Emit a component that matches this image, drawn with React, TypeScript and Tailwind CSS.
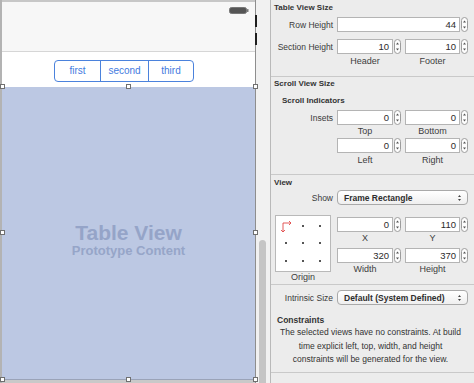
import React from "react";

const font = { fontFamily: '"Liberation Sans", Arial, sans-serif' };

function Stepper() {
    return (
        <svg width="7" height="15" viewBox="0 0 7 15" className="shrink-0">
            <rect x="0.5" y="0.5" width="6" height="14" rx="3" fill="#fdfdfd" stroke="#9c9c9c" />
            <path d="M2 5.5 L3.5 3.5 L5 5.5 Z" fill="#555" />
            <path d="M2 9.5 L3.5 11.5 L5 9.5 Z" fill="#555" />
        </svg>
    );
}

function Field({ value, w }: { value: string; w: string }) {
    return (
        <div className="flex items-center gap-[1px]">
            <div
                className={`${w} h-[15px] bg-white border border-[#b4b4b4] text-right pr-[3px] text-[9.5px] leading-[13px] text-[#2b2b2b]`}
            >
                {value}
            </div>
            <Stepper />
        </div>
    );
}

function Sub({ children, w }: { children: React.ReactNode; w: string }) {
    return <div className={`${w} text-center text-[9px] leading-[10px] text-[#3d3d3d]`}>{children}</div>;
}

function Dropdown({ label }: { label: string }) {
    return (
        <div className="w-[131px] h-[15px] rounded-[4px] border border-[#a9a9a9] bg-gradient-to-b from-white to-[#efefef] flex items-center justify-between pl-[6px] pr-[5px]">
            <span className="text-[8.5px] font-bold text-[#2e2e2e] leading-[10px]">{label}</span>
            <svg width="5" height="8" viewBox="0 0 5 8">
                <path d="M1 3 L2.5 1 L4 3 Z" fill="#444" />
                <path d="M1 5 L2.5 7 L4 5 Z" fill="#444" />
            </svg>
        </div>
    );
}

function Label({ children }: { children: React.ReactNode }) {
    return <div className="w-[62px] shrink-0 text-right text-[8.5px] leading-[10px] text-[#3a3a3a] whitespace-nowrap">{children}</div>;
}

function Handle({ className }: { className: string }) {
    return <div className={`absolute w-[5px] h-[5px] bg-white border border-[#6f6f6f] ${className}`} />;
}

function Phone() {
    return (
        <div className="relative w-[254px] flex flex-col border-r border-[#8e8e8e]">
            <div className="h-[2px] bg-[#c7c7c7]" />
            <div className="h-[50px] bg-[#f7f7f7] border-b border-[#d6d6d6] flex justify-end pt-[5px] pr-[6px]">
                <svg width="20" height="7" viewBox="0 0 20 7">
                    <rect x="0.5" y="0.5" width="17" height="6" rx="2" fill="#555" stroke="#777" />
                    <rect x="18" y="2" width="1.5" height="3" rx="0.5" fill="#777" />
                </svg>
            </div>
            <div className="h-[35px] bg-white pt-[8px] pl-[52px]">
                <div className="flex h-[22px] w-[140px] rounded-[4px] border border-[#4b82dc] text-[10px] text-[#3f7be0] leading-[20px]">
                    <div className="w-[46px] text-center border-r border-[#4b82dc]">first</div>
                    <div className="w-[48px] text-center border-r border-[#4b82dc]">second</div>
                    <div className="flex-1 text-center">third</div>
                </div>
            </div>
            <div className="relative h-[293px] bg-[#bcc8e3] flex flex-col items-center justify-center pt-[14px] border-b border-[#9aa3b8]">
                <div className="text-[21px] font-bold leading-[22px] text-[#95a4c8]">Table View</div>
                <div className="text-[13px] font-bold leading-[14px] text-[#96a5c8]">Prototype Content</div>
                <Handle className="-left-[2px] -top-[3px]" />
                <Handle className="left-[124px] -top-[3px]" />
                <Handle className="-right-[3px] -top-[3px]" />
                <Handle className="-left-[2px] top-[143px]" />
                <Handle className="-right-[3px] top-[143px]" />
                <Handle className="-left-[2px] -bottom-[3px]" />
                <Handle className="left-[124px] -bottom-[3px]" />
                <Handle className="-right-[3px] -bottom-[3px]" />
            </div>
            <div className="flex-1 bg-[#c9c9c9]" />
            <div className="absolute -right-[2px] top-[15px] w-[2px] h-[12px] bg-[#1e1e1e]" />
            <div className="absolute -right-[2px] top-[33px] w-[2px] h-[12px] bg-[#1e1e1e]" />
        </div>
    );
}

function Panel() {
    return (
        <div className="w-[204px] border-l border-[#b9b9b9] bg-[#ececec] flex flex-col text-[#333]">
            {/* Table View Size */}
            <div className="h-[77px] border-b border-[#c9c9c9] px-[3px]">
                <div className="pt-[3px] text-[8px] font-bold leading-[10px] text-[#333]">Table View Size</div>
                <div className="mt-[4px] flex items-center gap-[4px] -ml-[3px]">
                    <Label>Row Height</Label>
                    <Field value="44" w="w-[123px]" />
                </div>
                <div className="mt-[7px] flex items-center gap-[4px] -ml-[3px]">
                    <Label>Section Height</Label>
                    <Field value="10" w="w-[56px]" />
                    <Field value="10" w="w-[55px]" />
                </div>
                <div className="mt-[2px] flex gap-[12px] pl-[63px]">
                    <Sub w="w-[56px]">Header</Sub>
                    <Sub w="w-[55px]">Footer</Sub>
                </div>
            </div>

            {/* Scroll View Size */}
            <div className="h-[98px] border-b border-[#c9c9c9] px-[3px]">
                <div className="pt-[2px] text-[8px] font-bold leading-[10px]">Scroll View Size</div>
                <div className="mt-[7px] pl-[8px] text-[8px] font-bold leading-[10px]">Scroll Indicators</div>
                <div className="mt-[4px] flex items-center gap-[4px] -ml-[3px]">
                    <Label>Insets</Label>
                    <Field value="0" w="w-[56px]" />
                    <Field value="0" w="w-[55px]" />
                </div>
                <div className="mt-[1px] flex gap-[12px] pl-[63px]">
                    <Sub w="w-[56px]">Top</Sub>
                    <Sub w="w-[55px]">Bottom</Sub>
                </div>
                <div className="mt-[2px] flex items-center gap-[4px] pl-[63px]">
                    <Field value="0" w="w-[56px]" />
                    <Field value="0" w="w-[55px]" />
                </div>
                <div className="mt-[2px] flex gap-[12px] pl-[63px]">
                    <Sub w="w-[56px]">Left</Sub>
                    <Sub w="w-[55px]">Right</Sub>
                </div>
            </div>

            {/* View */}
            <div className="h-[110px] border-b border-[#c9c9c9] px-[3px]">
                <div className="pt-[3px] text-[8px] font-bold leading-[10px]">View</div>
                <div className="mt-[2px] flex items-center gap-[4px] -ml-[3px]">
                    <Label>Show</Label>
                    <Dropdown label="Frame Rectangle" />
                </div>
                <div className="mt-[10px] flex gap-[6px] pl-[1px]">
                    <div className="flex flex-col">
                        <div className="relative w-[56px] h-[57px] bg-white border border-[#b9b9b9] grid grid-cols-3 grid-rows-3 place-items-center px-[1px] py-[1px]">
                            {Array.from({ length: 9 }).map((_, i) => (
                                <div key={i} className={i === 0 ? "w-[2px] h-[2px]" : "w-[2px] h-[2px] bg-[#555]"} />
                            ))}
                            <svg className="absolute left-[4px] top-[4px]" width="14" height="14" viewBox="0 0 14 14">
                                <path d="M3 3 H11 M9 1 L11 3 L9 5" stroke="#e04848" strokeWidth="0.9" fill="none" />
                                <path d="M3 3 V12 M1 10 L3 12 L5 10" stroke="#e04848" strokeWidth="0.9" fill="none" />
                            </svg>
                        </div>
                        <div className="w-[56px] text-center text-[9px] leading-[10px] text-[#3d3d3d]">Origin</div>
                    </div>
                    <div className="flex flex-col pt-[2px]">
                        <div className="flex gap-[4px]">
                            <Field value="0" w="w-[56px]" />
                            <Field value="110" w="w-[55px]" />
                        </div>
                        <div className="mt-[1px] flex gap-[12px]">
                            <Sub w="w-[56px]">X</Sub>
                            <Sub w="w-[55px]">Y</Sub>
                        </div>
                        <div className="mt-[5px] flex gap-[4px]">
                            <Field value="320" w="w-[56px]" />
                            <Field value="370" w="w-[55px]" />
                        </div>
                        <div className="mt-[1px] flex gap-[12px]">
                            <Sub w="w-[56px]">Width</Sub>
                            <Sub w="w-[55px]">Height</Sub>
                        </div>
                    </div>
                </div>
            </div>

            {/* Intrinsic size + constraints */}
            <div className="h-[88px] border-b border-[#c9c9c9] px-[3px]">
                <div className="pt-[5px] flex items-center gap-[4px] -ml-[3px]">
                    <Label>Intrinsic Size</Label>
                    <Dropdown label="Default (System Defined)" />
                </div>
                <div className="mt-[10px] pl-[3px] text-[8.5px] font-bold leading-[10px]">Constraints</div>
                <div className="mt-[1px] text-center text-[8.5px] leading-[13.5px] text-[#333] pr-[4px]">
                    The selected views have no constraints. At build
                    <br />
                    time explicit left, top, width, and height
                    <br />
                    constraints will be generated for the view.
                </div>
            </div>
            <div className="flex-1" />
        </div>
    );
}

export default function App() {
    return (
        <div className="w-[474px] h-[383px] flex overflow-hidden bg-[#ececec]" style={font}>
            <div className="w-[270px] flex">
                <div className="w-[2px] bg-[#b3b3b3]" />
                <Phone />
                <div className="flex-1 bg-[#f1f1f1] flex flex-col">
                    <div className="h-[240px]" />
                    <div className="flex-1 w-[7px] ml-[3px] rounded-t-full bg-[#c5c5c5]" />
                </div>
            </div>
            <Panel />
        </div>
    );
}
